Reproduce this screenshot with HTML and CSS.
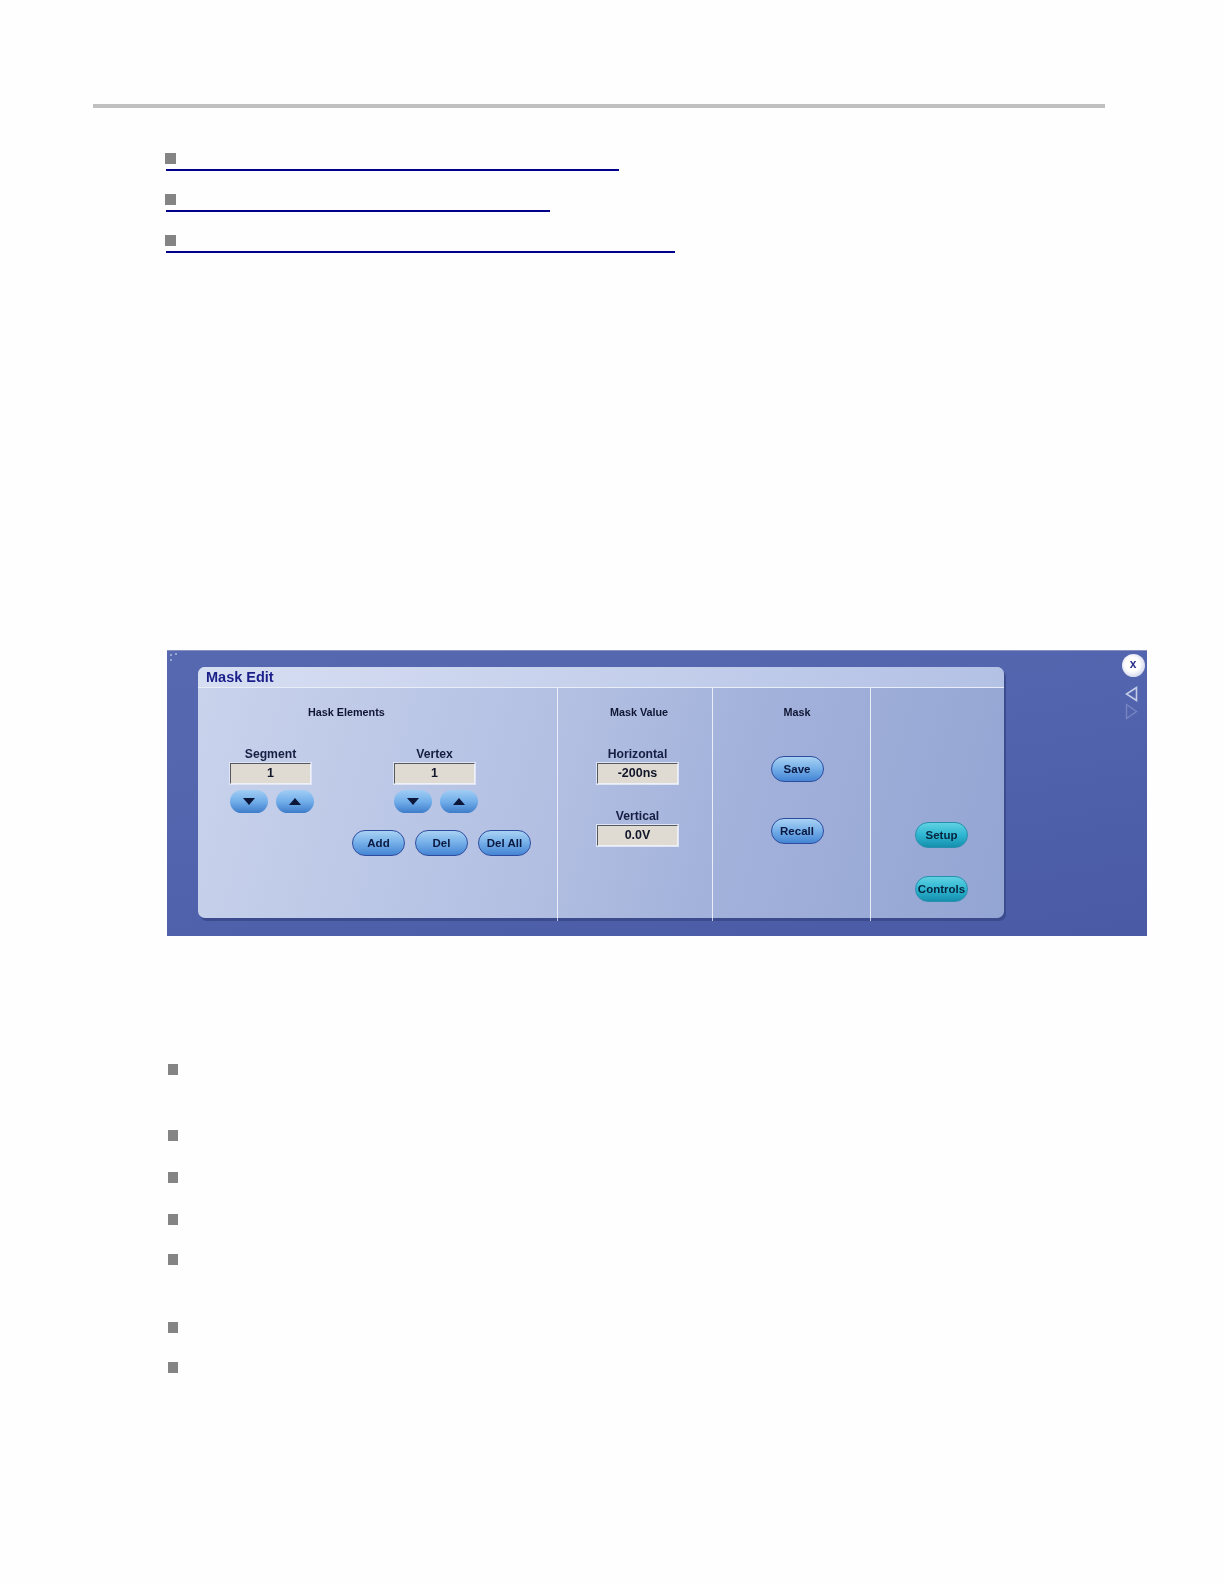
FILE: index.html
```html
<!DOCTYPE html>
<html lang="en">
<head>
    <meta charset="UTF-8">
    <title>Mask Edit</title>
    <link rel="stylesheet" href="styles.css">
</head>
<body>
    <div class="top-rule"></div>

    <ul class="link-list">
        <li class="link-item"><span class="bullet"></span><span class="link-line line-a"></span></li>
        <li class="link-item"><span class="bullet"></span><span class="link-line line-b"></span></li>
        <li class="link-item"><span class="bullet"></span><span class="link-line line-c"></span></li>
    </ul>

    <div class="panel">
        <svg class="grip" width="10" height="10" viewBox="0 0 10 10">
            <path d="M1 2h2v2H1zM6 1h2v2H6zM1 7h2v2H1z" fill="#9aa6d4"/>
        </svg>

        <div class="card">
            <div class="card-header">Mask Edit</div>
            <div class="card-body">
                <!-- Mask Elements -->
                <div class="col col-elements">
                    <div class="col-title">Hask Elements</div>
                    <div class="spinners">
                        <div class="spinner">
                            <div class="field-label">Segment</div>
                            <div class="field-value">1</div>
                            <div class="arrows">
                                <button class="btn-arrow"><span class="tri-down"></span></button>
                                <button class="btn-arrow"><span class="tri-up"></span></button>
                            </div>
                        </div>
                        <div class="spinner">
                            <div class="field-label">Vertex</div>
                            <div class="field-value">1</div>
                            <div class="arrows">
                                <button class="btn-arrow"><span class="tri-down"></span></button>
                                <button class="btn-arrow"><span class="tri-up"></span></button>
                            </div>
                        </div>
                    </div>
                    <div class="actions">
                        <button class="btn">Add</button>
                        <button class="btn">Del</button>
                        <button class="btn">Del All</button>
                    </div>
                </div>

                <!-- Mask Value -->
                <div class="col col-value">
                    <div class="col-title">Mask Value</div>
                    <div class="value-field">
                        <div class="field-label">Horizontal</div>
                        <div class="field-value">-200ns</div>
                    </div>
                    <div class="value-field">
                        <div class="field-label">Vertical</div>
                        <div class="field-value">0.0V</div>
                    </div>
                </div>

                <!-- Mask -->
                <div class="col col-mask">
                    <div class="col-title">Mask</div>
                    <button class="btn">Save</button>
                    <button class="btn">Recall</button>
                </div>

                <!-- Setup / Controls -->
                <div class="col col-nav">
                    <button class="btn btn-teal">Setup</button>
                    <button class="btn btn-teal">Controls</button>
                </div>
            </div>
        </div>

        <div class="side">
            <div class="close">x</div>
            <svg class="side-arrow" width="13" height="16" viewBox="0 0 13 16">
                <path d="M11.5 1.5v13L1.5 8z" fill="none" stroke="#c3cdea" stroke-width="1.6"/>
            </svg>
            <svg class="side-arrow" width="13" height="17" viewBox="0 0 13 17">
                <path d="M1.5 1.5v14L11.5 8.5z" fill="none" stroke="#7685c2" stroke-width="1.4"/>
            </svg>
        </div>
    </div>

    <ul class="bullet-list">
        <li class="bullet-item wrap"><span class="bullet"></span></li>
        <li class="bullet-item"><span class="bullet"></span></li>
        <li class="bullet-item"><span class="bullet"></span></li>
        <li class="bullet-item tight"><span class="bullet"></span></li>
        <li class="bullet-item wrap-long"><span class="bullet"></span></li>
        <li class="bullet-item tight"><span class="bullet"></span></li>
        <li class="bullet-item"><span class="bullet"></span></li>
    </ul>
</body>
</html>
```

FILE: styles.css
```css
* {
    margin: 0;
    padding: 0;
    box-sizing: border-box;
}

body {
    font-family: "Liberation Sans", Arial, sans-serif;
    background-color: #fefefe;
    padding-top: 104px;
    color: #0f1634;
    overflow: hidden;
}

ul {
    list-style: none;
}

.top-rule {
    width: 1012px;
    height: 4px;
    margin-left: 93px;
    background: #c0c0c0;
}

.bullet {
    display: block;
    width: 11px;
    height: 11px;
    background: #848484;
}

/* Links at the top */
.link-list {
    margin: 45px 0 0 165px;
}

.link-item {
    height: 41px;
}

.link-line {
    display: block;
    height: 2px;
    margin: 5px 0 0 1px;
    background: #00008b;
}

.line-a { width: 453px; }
.line-b { width: 384px; }
.line-c { width: 509px; }

/* Mask Edit panel */
.panel {
    position: relative;
    display: flex;
    width: 980px;
    height: 286px;
    margin: 374px 0 0 167px;
    padding: 16px 0 0 31px;
    background: linear-gradient(170deg, #5669b0 0%, #5264ad 45%, #4a5aa5 100%);
    border-top: 1px solid #8791c2;
    filter: blur(0.5px);
}

.grip {
    position: absolute;
    left: 2px;
    top: 1px;
}

.card {
    width: 806px;
    height: 251px;
    flex: none;
    border-radius: 7px;
    background: linear-gradient(105deg, #c9d3ec 0%, #b2bfe2 45%, #a3b2db 65%, #93a5d3 100%);
    box-shadow: 2px 3px 0 #3c4b8e;
}

.card-header {
    height: 21px;
    padding-left: 8px;
    font-size: 14.5px;
    font-weight: bold;
    line-height: 21px;
    color: #1a1f8a;
    background: linear-gradient(90deg, #d6def2 0%, #c4cfeb 55%, #b3c1e5 100%);
    border-bottom: 1.5px solid #e8edf8;
    border-radius: 7px 7px 0 0;
}

.card-body {
    display: grid;
    grid-template-columns: 359px 155px 158px 134px;
    height: 230px;
}

.col {
    position: relative;
    border-left: 1.5px solid #e8edf8;
}

/* the dividers run a little past the bottom of the card */
.col::after {
    content: "";
    position: absolute;
    left: -1.5px;
    bottom: -3px;
    width: 1.5px;
    height: 3px;
    background: #c5cdea;
}

.col-title {
    margin-top: 17px;
    font-size: 10.8px;
    font-weight: bold;
    line-height: 14px;
    white-space: nowrap;
    text-align: center;
}

.field-label {
    font-size: 12.2px;
    font-weight: bold;
    line-height: 14px;
    text-align: center;
    color: #161f42;
}

.field-value {
    height: 21px;
    margin-top: 2px;
    font-size: 12.5px;
    font-weight: bold;
    line-height: 18px;
    text-align: center;
    color: #12162a;
    background: #dfdbd2;
    border: 1.5px solid;
    border-color: #55585f #eef1f8 #eef1f8 #55585f;
    outline: 1px solid #dfe5f4;
}

.col-elements {
    border-left: 0;
}

.col-elements::after {
    display: none;
}

.col-elements .col-title {
    width: 75px;
    margin-left: 110px;
}

.spinners {
    display: flex;
    gap: 83px;
    margin: 28px 0 0 32px;
}

.spinner {
    width: 81px;
}

.arrows {
    display: flex;
    gap: 8px;
    margin-top: 6px;
}

.btn-arrow {
    display: flex;
    flex: none;
    align-items: center;
    justify-content: center;
    width: 38px;
    height: 23px;
    border: 0;
    border-radius: 12px;
    background: linear-gradient(180deg, #a0cdf3 0%, #72aeea 50%, #3e7cca 100%);
}

.tri-down,
.tri-up {
    width: 0;
    height: 0;
    border-left: 6px solid transparent;
    border-right: 6px solid transparent;
}

.tri-down {
    border-top: 7px solid #0c1638;
}

.tri-up {
    border-bottom: 7px solid #0c1638;
}

.actions {
    display: flex;
    justify-content: flex-end;
    gap: 10px;
    margin-top: 17px;
    padding-right: 26px;
}

.btn {
    width: 53px;
    height: 26px;
    font-family: inherit;
    font-size: 11.5px;
    font-weight: bold;
    white-space: nowrap;
    color: #0a1840;
    border: 1.5px solid #2e4c9e;
    border-radius: 13px;
    background: linear-gradient(180deg, #a9d2f3 0%, #79b2ea 45%, #4484d4 100%);
}

.btn-teal {
    color: #06243e;
    border: 1px solid #2a8fae;
    background: linear-gradient(180deg, #5fd2e2 0%, #2fb6d0 50%, #1590ae 100%);
}

.col-value {
    padding-left: 39px;
}

.col-value .col-title {
    width: 84px;
}

.value-field {
    width: 81px;
    margin-top: 28px;
}

.value-field + .value-field {
    margin-top: 25px;
}

.col-mask {
    display: flex;
    flex-direction: column;
    align-items: center;
    padding-left: 11px;
}

.col-mask .btn {
    margin-top: 37px;
}

.col-mask .btn + .btn {
    margin-top: 36px;
}

.col-nav {
    display: flex;
    flex-direction: column;
    gap: 28px;
    justify-content: flex-end;
    padding: 0 0 16px 44px;
}

/* Close and page arrows on the right */
.side {
    display: flex;
    flex-direction: column;
    align-items: center;
    gap: 1px;
    width: 24px;
    margin: -13px 0 0 117px;
}

.close {
    width: 23px;
    height: 23px;
    margin-bottom: 8px;
    font-size: 12px;
    font-weight: bold;
    line-height: 21px;
    text-align: center;
    color: #2a2f8e;
    border-radius: 50%;
    background: radial-gradient(circle at 45% 45%, #ffffff 40%, #d9ddee 68%, #9fa8d0 100%);
}

.side-arrow {
    margin-right: 4px;
}

/* Bullets below the panel */
.bullet-list {
    margin: 128px 0 0 168px;
}

.bullet-item {
    height: 11px;
    margin-bottom: 31px;
}

.bullet-item.wrap {
    margin-bottom: 55px;
}

.bullet-item.tight {
    margin-bottom: 29px;
}

.bullet-item.wrap-long {
    margin-bottom: 57px;
}

.bullet-item .bullet {
    width: 10px;
}
```
